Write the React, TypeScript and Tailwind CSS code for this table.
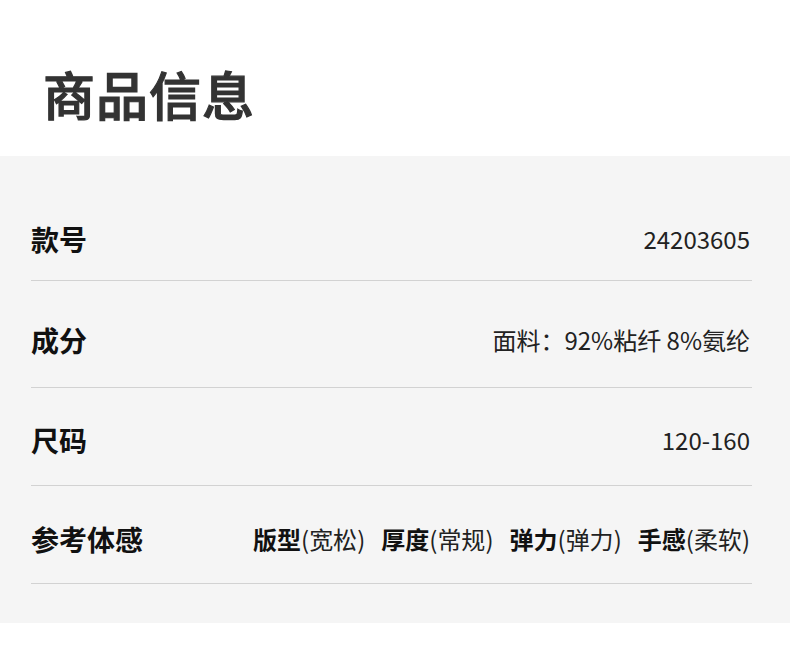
const font = { fontFamily: '"Noto Sans CJK SC", "Noto Sans", sans-serif' };

const feel = [
  ["版型", "宽松"],
  ["厚度", "常规"],
  ["弹力", "弹力"],
  ["手感", "柔软"],
];

const Row = ({
  label,
  className,
  children,
}: {
  label: string;
  className: string;
  children: React.ReactNode;
}) => (
  <div
    className={`flex items-center justify-between border-b border-[#d2d2d2] pr-[2px] ${className}`}
  >
    <span className="text-[28px] leading-[40px] font-semibold text-[#111]">
      {label}
    </span>
    <div className="text-[24px] leading-[40px] text-[#222]">{children}</div>
  </div>
);

export default function App() {
  return (
    <div className="w-[790px] h-[660px] bg-white" style={font}>
      <header className="h-[156px] pl-[43px] pt-[59px]">
        <h1 className="text-[52px] leading-[70px] font-medium text-[#333] tracking-[1px] [-webkit-text-stroke:1.2px_#333]">
          商品信息
        </h1>
      </header>

      <section className="bg-[#f5f5f5] pl-[31px] pr-[38px] pt-[63px] pb-[39px]">
        <Row label="款号" className="pb-[21px]">
          24203605
        </Row>
        <Row label="成分" className="pt-[39px] pb-[27px]">
          面料：92%粘纤 8%氨纶
        </Row>
        <Row label="尺码" className="pt-[32px] pb-[25px]">
          120-160
        </Row>
        <Row label="参考体感" className="pt-[33px] pb-[24px]">
          <div className="flex gap-[16px]">
            {feel.map(([k, v]) => (
              <span key={k}>
                <b className="font-semibold text-[#111]">{k}</b>({v})
              </span>
            ))}
          </div>
        </Row>
      </section>
    </div>
  );
}
